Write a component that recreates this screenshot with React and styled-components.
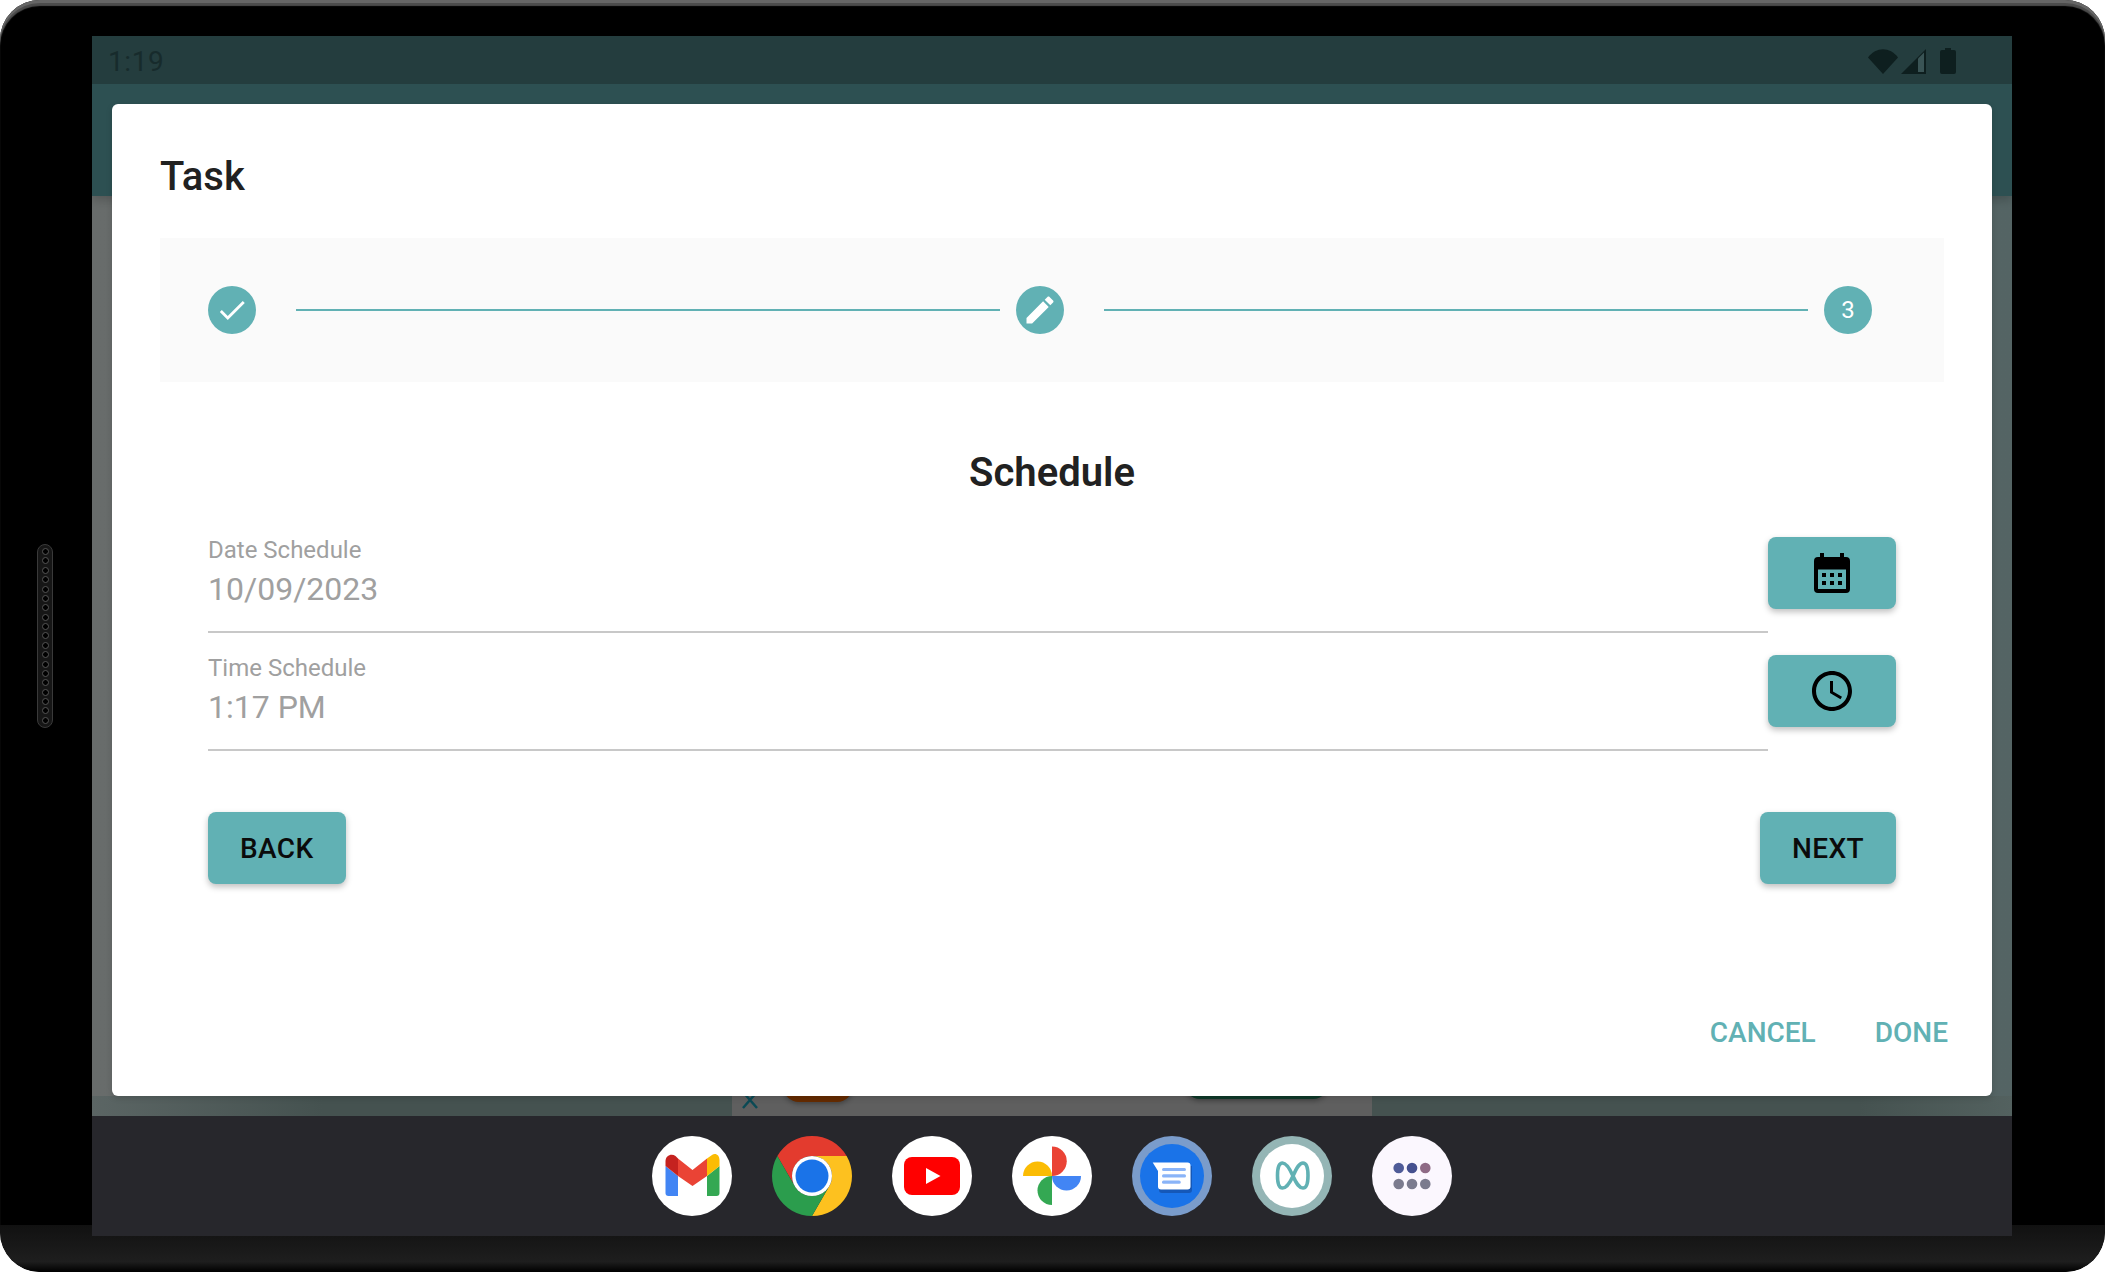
import React from 'react';
import styled, {createGlobalStyle} from 'styled-components';

const teal = '#61b1b4';

const GlobalStyle = createGlobalStyle`
  html, body {
    margin: 0;
    padding: 0;
    background: #fff;
  }
  body {
    font-family: Roboto, "Liberation Sans", sans-serif;
  }
  * {
    box-sizing: border-box;
  }
`

const Device = styled.div`
  position: relative;
  width: 2105px;
  height: 1272px;
  display: flex;
  overflow: hidden;
  background: #000;
  border-radius: 40px;
  padding: 36px 0;
  box-shadow: inset 0 3px 0 #666, inset 0 6px 1px #4c4c4c;
  &::after {
    content: '';
    position: absolute;
    left: 0;
    right: 0;
    bottom: 0;
    height: 47px;
    border-radius: 0 0 40px 40px;
    background: linear-gradient(#111 0%, #1e1e1e 78%, #000 100%);
  }
`

const LeftBezel = styled.div`
  position: relative;
  z-index: 1;
  width: 92px;
  display: flex;
  align-items: center;
  padding-left: 37px;
`

const Speaker = styled.div`
  width: 16px;
  height: 184px;
  border-radius: 8px;
  border: 1px solid #3a3a3a;
  background: #161616;
  display: flex;
  flex-direction: column;
  align-items: center;
  justify-content: space-between;
  padding: 3px 0;
`

const SpeakerHole = styled.div`
  width: 7px;
  height: 7px;
  border-radius: 50%;
  border: 1px solid #555;
  background: #000;
`

const Screen = styled.div`
  position: relative;
  z-index: 1;
  width: 1920px;
  height: 1200px;
  display: flex;
  flex-direction: column;
`

const StatusBar = styled.div`
  height: 48px;
  flex-shrink: 0;
  background: #243d3e;
  display: flex;
  align-items: center;
  padding: 3px 56px 1px 16px;
  color: #172b2c;
  font-size: 28px;
  letter-spacing: 0.6px;
  justify-content: space-between;
`

const StatusIcons = styled.div`
  display: flex;
  align-items: center;
`

const AppArea = styled.div`
  position: relative;
  flex: 1;
  padding: 20px;
  overflow: hidden;
  background: linear-gradient(90deg, #686c6b 0%, #546464 100%);
`

const Backdrop = styled.div`
  position: absolute;
  inset: 0;
  display: flex;
  flex-direction: column;
  justify-content: space-between;
`

const AppBar = styled.div`
  height: 112px;
  background: #2d5052;
  box-shadow: 0 4px 10px rgba(0, 0, 0, 0.2);
`

const BottomBand = styled.div`
  height: 20px;
  display: flex;
  justify-content: center;
  background: linear-gradient(90deg, #5b6564 0%, #455250 12%, #455250 92%, #53615f 100%);
`

const AdStrip = styled.div`
  width: 640px;
  background: #5f5f5f;
  display: flex;
  align-items: flex-start;
  padding-left: 8px;
`

const AdClose = styled.svg`
  width: 20px;
  height: 20px;
  margin-top: -6px;
  flex-shrink: 0;
`

const AdButton = styled.div`
  height: ${p => p.$height + 30}px;
  margin-top: -30px;
  width: ${p => p.$width}px;
  margin-left: ${p => p.$left}px;
  background: ${p => p.$color};
  border-radius: 0 0 16px 16px;
  box-shadow: 0 2px 5px rgba(0, 0, 0, 0.3);
`

const Dialog = styled.div`
  position: relative;
  height: 992px;
  background: #fff;
  border-radius: 6px;
  box-shadow: 0 2px 6px rgba(0, 0, 0, 0.15);
  display: flex;
  flex-direction: column;
  padding: 49px 48px 0;
`

const DialogTitle = styled.div`
  font-size: 40px;
  line-height: 47px;
  font-weight: 480;
  color: #212121;
  margin-bottom: 38px;
`

const Stepper = styled.div`
  height: 144px;
  flex-shrink: 0;
  background: #fafafa;
  display: flex;
  align-items: center;
  padding: 0 72px 0 48px;
`

const StepCircle = styled.div`
  width: 48px;
  height: 48px;
  flex-shrink: 0;
  border-radius: 50%;
  background: ${teal};
  color: #fff;
  font-size: 24px;
  display: flex;
  align-items: center;
  justify-content: center;
`

const StepLine = styled.div`
  flex: 1;
  height: 2px;
  background: ${teal};
  margin: 0 16px 0 40px;
`

const Heading = styled.div`
  font-size: 40px;
  line-height: 47px;
  font-weight: 600;
  color: #212121;
  text-align: center;
  margin: 67px 0 41px;
`

const Form = styled.div`
  padding: 0 48px;
  display: flex;
  flex-direction: column;
`

const FieldRow = styled.div`
  display: flex;
  align-items: flex-start;
  margin-bottom: 22px;
`

const Field = styled.div`
  flex: 1;
  height: 96px;
  border-bottom: 2px solid #c8c8c8;
  color: #a0a0a0;
`

const FieldLabel = styled.div`
  font-size: 24px;
  line-height: 28px;
  margin-top: -1px;
`

const FieldValue = styled.div`
  font-size: 32px;
  line-height: 38px;
  margin-top: 6px;
`

const PickerButton = styled.div`
  width: 128px;
  height: 72px;
  border-radius: 8px;
  background: ${teal};
  box-shadow: 0 3px 6px rgba(0, 0, 0, 0.25);
  display: flex;
  align-items: center;
  justify-content: center;
`

const NavRow = styled.div`
  display: flex;
  justify-content: space-between;
  margin-top: 39px;
`

const NavButton = styled.div`
  height: 72px;
  padding: 0 32px;
  border-radius: 8px;
  background: ${teal};
  box-shadow: 0 3px 6px rgba(0, 0, 0, 0.25);
  color: #0b0b0b;
  font-size: 28px;
  font-weight: 500;
  letter-spacing: 0.4px;
  display: flex;
  align-items: center;
`

const DialogFooter = styled.div`
  margin-top: auto;
  margin-right: -4px;
  padding-bottom: 47px;
  display: flex;
  justify-content: flex-end;
  gap: 59px;
`

const TextAction = styled.div`
  color: ${teal};
  font-size: 28px;
  line-height: 33px;
  font-weight: 500;
`

const Dock = styled.div`
  height: 120px;
  flex-shrink: 0;
  background: #27272c;
  display: flex;
  align-items: center;
  justify-content: center;
  gap: 40px;
`

const DockIcon = styled.svg`
  width: 80px;
  height: 80px;
  display: block;
`

const GmailIcon = () => (
    <DockIcon viewBox="0 0 80 80">
        <circle cx="40" cy="40" r="40" fill="#fff"/>
        <path d="M13.5 30L26 40V60H16.5a3 3 0 0 1-3-3z" fill="#4285f4"/>
        <path d="M55 40L67.5 30V57a3 3 0 0 1-3 3H55z" fill="#34a853"/>
        <path d="M26 22.500L40.500 34 55 22.500V40L40.500 50 26 40z" fill="#ea4335"/>
        <path d="M13.500 30V25c0-5.500 6-8 10-5l2.500 2.500V40z" fill="#c5221f"/>
        <path d="M55 22.500L60 19c3.500-2.500 7.500 0 7.500 5v6L55 40z" fill="#fbbc04"/>
    </DockIcon>
)

const ChromeIcon = () => (
    <DockIcon viewBox="0 0 80 80">
        <path d="M5.360 20A40 40 0 0 1 74.640 20H40A20 20 0 0 0 22.680 50Z" fill="#e33b2e"/>
        <path d="M74.640 20A40 40 0 0 1 40 80L57.320 50A20 20 0 0 0 40 20Z" fill="#fdc11f"/>
        <path d="M40 80A40 40 0 0 1 5.360 20L22.680 50A20 20 0 0 0 57.320 50Z" fill="#2b9d4d"/>
        <circle cx="40" cy="40" r="20" fill="#fff"/>
        <circle cx="40" cy="40" r="16.500" fill="#1a73e8"/>
    </DockIcon>
)

const YoutubeIcon = () => (
    <DockIcon viewBox="0 0 80 80">
        <circle cx="40" cy="40" r="40" fill="#fff"/>
        <rect x="12" y="21" width="56" height="38" rx="8" fill="#ff0000"/>
        <path d="M34 32L48.500 40 34 48z" fill="#fff"/>
    </DockIcon>
)

const PhotosIcon = () => (
    <DockIcon viewBox="0 0 80 80">
        <circle cx="40" cy="40" r="40" fill="#fff"/>
        <path d="M40 10.500a14.750 14.750 0 0 1 0 29.500z" fill="#ea4335"/>
        <path d="M11 40a14.500 14.500 0 0 1 29 0z" fill="#fbbc04"/>
        <path d="M40 69a14.500 14.500 0 0 1 0-29z" fill="#34a853"/>
        <path d="M69 40a14.500 14.500 0 0 1-29 0z" fill="#4285f4"/>
    </DockIcon>
)

const MessagesIcon = () => (
    <DockIcon viewBox="0 0 80 80">
        <circle cx="40" cy="40" r="40" fill="#7a9ccb"/>
        <circle cx="40" cy="40" r="32" fill="#1a73e8"/>
        <path d="M27 30L60 30V54a3 3 0 0 1-3 3H30a3 3 0 0 1-3-3z" fill="#1558b8"/>
        <path d="M20.700 26.500H55.500a3 3 0 0 1 3 3V50.500a3 3 0 0 1-3 3H29a3 3 0 0 1-3-3V35z" fill="#fff"/>
        <rect x="30" y="32" width="24" height="3" rx="1.500" fill="#8ab4f8"/>
        <rect x="30" y="38.200" width="24" height="3.200" rx="1.500" fill="#8ab4f8"/>
        <rect x="30" y="44.500" width="18.700" height="3.200" rx="1.500" fill="#8ab4f8"/>
    </DockIcon>
)

const InfinityIcon = () => (
    <DockIcon viewBox="0 0 80 80">
        <circle cx="40" cy="40" r="40" fill="#94b5b5"/>
        <circle cx="40" cy="40" r="32" fill="#fff"/>
        <path
            d="M41 40C37 31 34 27 30.500 27C26.500 27 25.500 33 25.500 39.500C25.500 46 26.500 52 30.500 52C34 52 37 49 41 40C45 31 47.500 27 51 27C55 27 56 33 56 39.500C56 46 55 52 51 52C47.500 52 45 49 41 40Z"
            fill="none" stroke={teal} strokeWidth="3.600"/>
    </DockIcon>
)

const AppsIcon = () => (
    <DockIcon viewBox="0 0 80 80">
        <circle cx="40" cy="40" r="40" fill="#fbf7fe"/>
        <circle cx="26.700" cy="32" r="5.300" fill="#4f5b98"/>
        <circle cx="40" cy="32" r="5.300" fill="#45508f"/>
        <circle cx="53.300" cy="32" r="5.300" fill="#8e6a85"/>
        <circle cx="26.700" cy="48" r="5.300" fill="#7b7b8e"/>
        <circle cx="40" cy="48" r="5.300" fill="#7b7b8e"/>
        <circle cx="53.300" cy="48" r="5.300" fill="#7b7b8e"/>
    </DockIcon>
)

const CalendarIcon = () => (
    <svg width="36" height="40" viewBox="0 0 36 40">
        <path fill="#000" fillRule="evenodd"
              d="M6 0h4v4h16V0h4v4h2a4 4 0 0 1 4 4v28a4 4 0 0 1-4 4H4a4 4 0 0 1-4-4V8a4 4 0 0 1 4-4h2zM4 16.500v19.500h28V16.500z"/>
        <rect x="8" y="20" width="4" height="4"/>
        <rect x="16" y="20" width="4" height="4"/>
        <rect x="24" y="20" width="4" height="4"/>
        <rect x="8" y="28" width="4" height="4"/>
        <rect x="16" y="28" width="4" height="4"/>
        <rect x="24" y="28" width="4" height="4"/>
    </svg>
)

const ClockIcon = () => (
    <svg width="48" height="48" viewBox="0 0 24 24">
        <path fill="#000"
              d="M11.990 2C6.470 2 2 6.480 2 12s4.470 10 9.990 10C17.520 22 22 17.520 22 12S17.520 2 11.990 2zM12 20c-4.420 0-8-3.580-8-8s3.580-8 8-8 8 3.580 8 8-3.580 8-8 8zm.500-13H11v6l5.250 3.150.750-1.230-4.500-2.670z"/>
    </svg>
)

const CheckIcon = () => (
    <svg width="34" height="34" viewBox="0 0 24 24">
        <path fill="#fff" d="M9 16.170L4.830 12l-1.420 1.410L9 19 21 7l-1.410-1.410z"/>
    </svg>
)

const EditIcon = () => (
    <svg width="36" height="36" viewBox="0 0 24 24">
        <path fill="#fff"
              d="M3 17.250V21h3.750L17.810 9.940l-3.750-3.750L3 17.250zM20.710 7.040c.39-.39.39-1.020 0-1.410l-2.340-2.340c-.39-.39-1.020-.39-1.410 0l-1.830 1.830 3.750 3.750 1.830-1.830z"/>
    </svg>
)

const statusColor = '#0e1f1f';

function App() {
    const holes = Array.from({length: 19});

    return (
        <Device>
            <GlobalStyle/>
            <LeftBezel>
                <Speaker>
                    {holes.map((_, i) => <SpeakerHole key={i}/>)}
                </Speaker>
            </LeftBezel>
            <Screen>
                <StatusBar>
                    <span>1:19</span>
                    <StatusIcons>
                        <svg width="30" height="25" viewBox="0 0 30 25">
                            <path d="M0 8.500C8-2.500 22-2.500 30 8.500L15 25z" fill={statusColor}/>
                        </svg>
                        <svg width="26" height="25" viewBox="0 0 26 25" style={{marginLeft: 3}}>
                            <path d="M0 25L25 0V25z" fill={statusColor}/>
                            <path d="M17 9.500L23 3.500V23H17z" fill="#3a5455"/>
                        </svg>
                        <svg width="16" height="26" viewBox="0 0 16 26" style={{marginLeft: 13}}>
                            <path d="M5 0h6v2h3a2 2 0 0 1 2 2v20a2 2 0 0 1-2 2H2a2 2 0 0 1-2-2V4a2 2 0 0 1 2-2h3z"
                                  fill={statusColor}/>
                        </svg>
                    </StatusIcons>
                </StatusBar>
                <AppArea>
                    <Backdrop>
                        <AppBar/>
                        <BottomBand>
                            <AdStrip>
                                <AdClose viewBox="0 0 20 20">
                                    <path d="M3 18L17 2M3 2l14 16" stroke="#0b4a55" strokeWidth="2.500" fill="none"/>
                                </AdClose>
                                <AdButton $width={70} $height={6} $left={23} $color="#652b00"/>
                                <AdButton $width={145} $height={3} $left={331} $color="#0f3a2a"/>
                            </AdStrip>
                        </BottomBand>
                    </Backdrop>
                    <Dialog>
                        <DialogTitle>Task</DialogTitle>
                        <Stepper>
                            <StepCircle><CheckIcon/></StepCircle>
                            <StepLine/>
                            <StepCircle><EditIcon/></StepCircle>
                            <StepLine/>
                            <StepCircle>3</StepCircle>
                        </Stepper>
                        <Heading>Schedule</Heading>
                        <Form>
                            <FieldRow>
                                <Field>
                                    <FieldLabel>Date Schedule</FieldLabel>
                                    <FieldValue>10/09/2023</FieldValue>
                                </Field>
                                <PickerButton><CalendarIcon/></PickerButton>
                            </FieldRow>
                            <FieldRow>
                                <Field>
                                    <FieldLabel>Time Schedule</FieldLabel>
                                    <FieldValue>1:17 PM</FieldValue>
                                </Field>
                                <PickerButton><ClockIcon/></PickerButton>
                            </FieldRow>
                            <NavRow>
                                <NavButton>BACK</NavButton>
                                <NavButton>NEXT</NavButton>
                            </NavRow>
                        </Form>
                        <DialogFooter>
                            <TextAction>CANCEL</TextAction>
                            <TextAction>DONE</TextAction>
                        </DialogFooter>
                    </Dialog>
                </AppArea>
                <Dock>
                    <GmailIcon/>
                    <ChromeIcon/>
                    <YoutubeIcon/>
                    <PhotosIcon/>
                    <MessagesIcon/>
                    <InfinityIcon/>
                    <AppsIcon/>
                </Dock>
            </Screen>
        </Device>
    );
}

export default App;
